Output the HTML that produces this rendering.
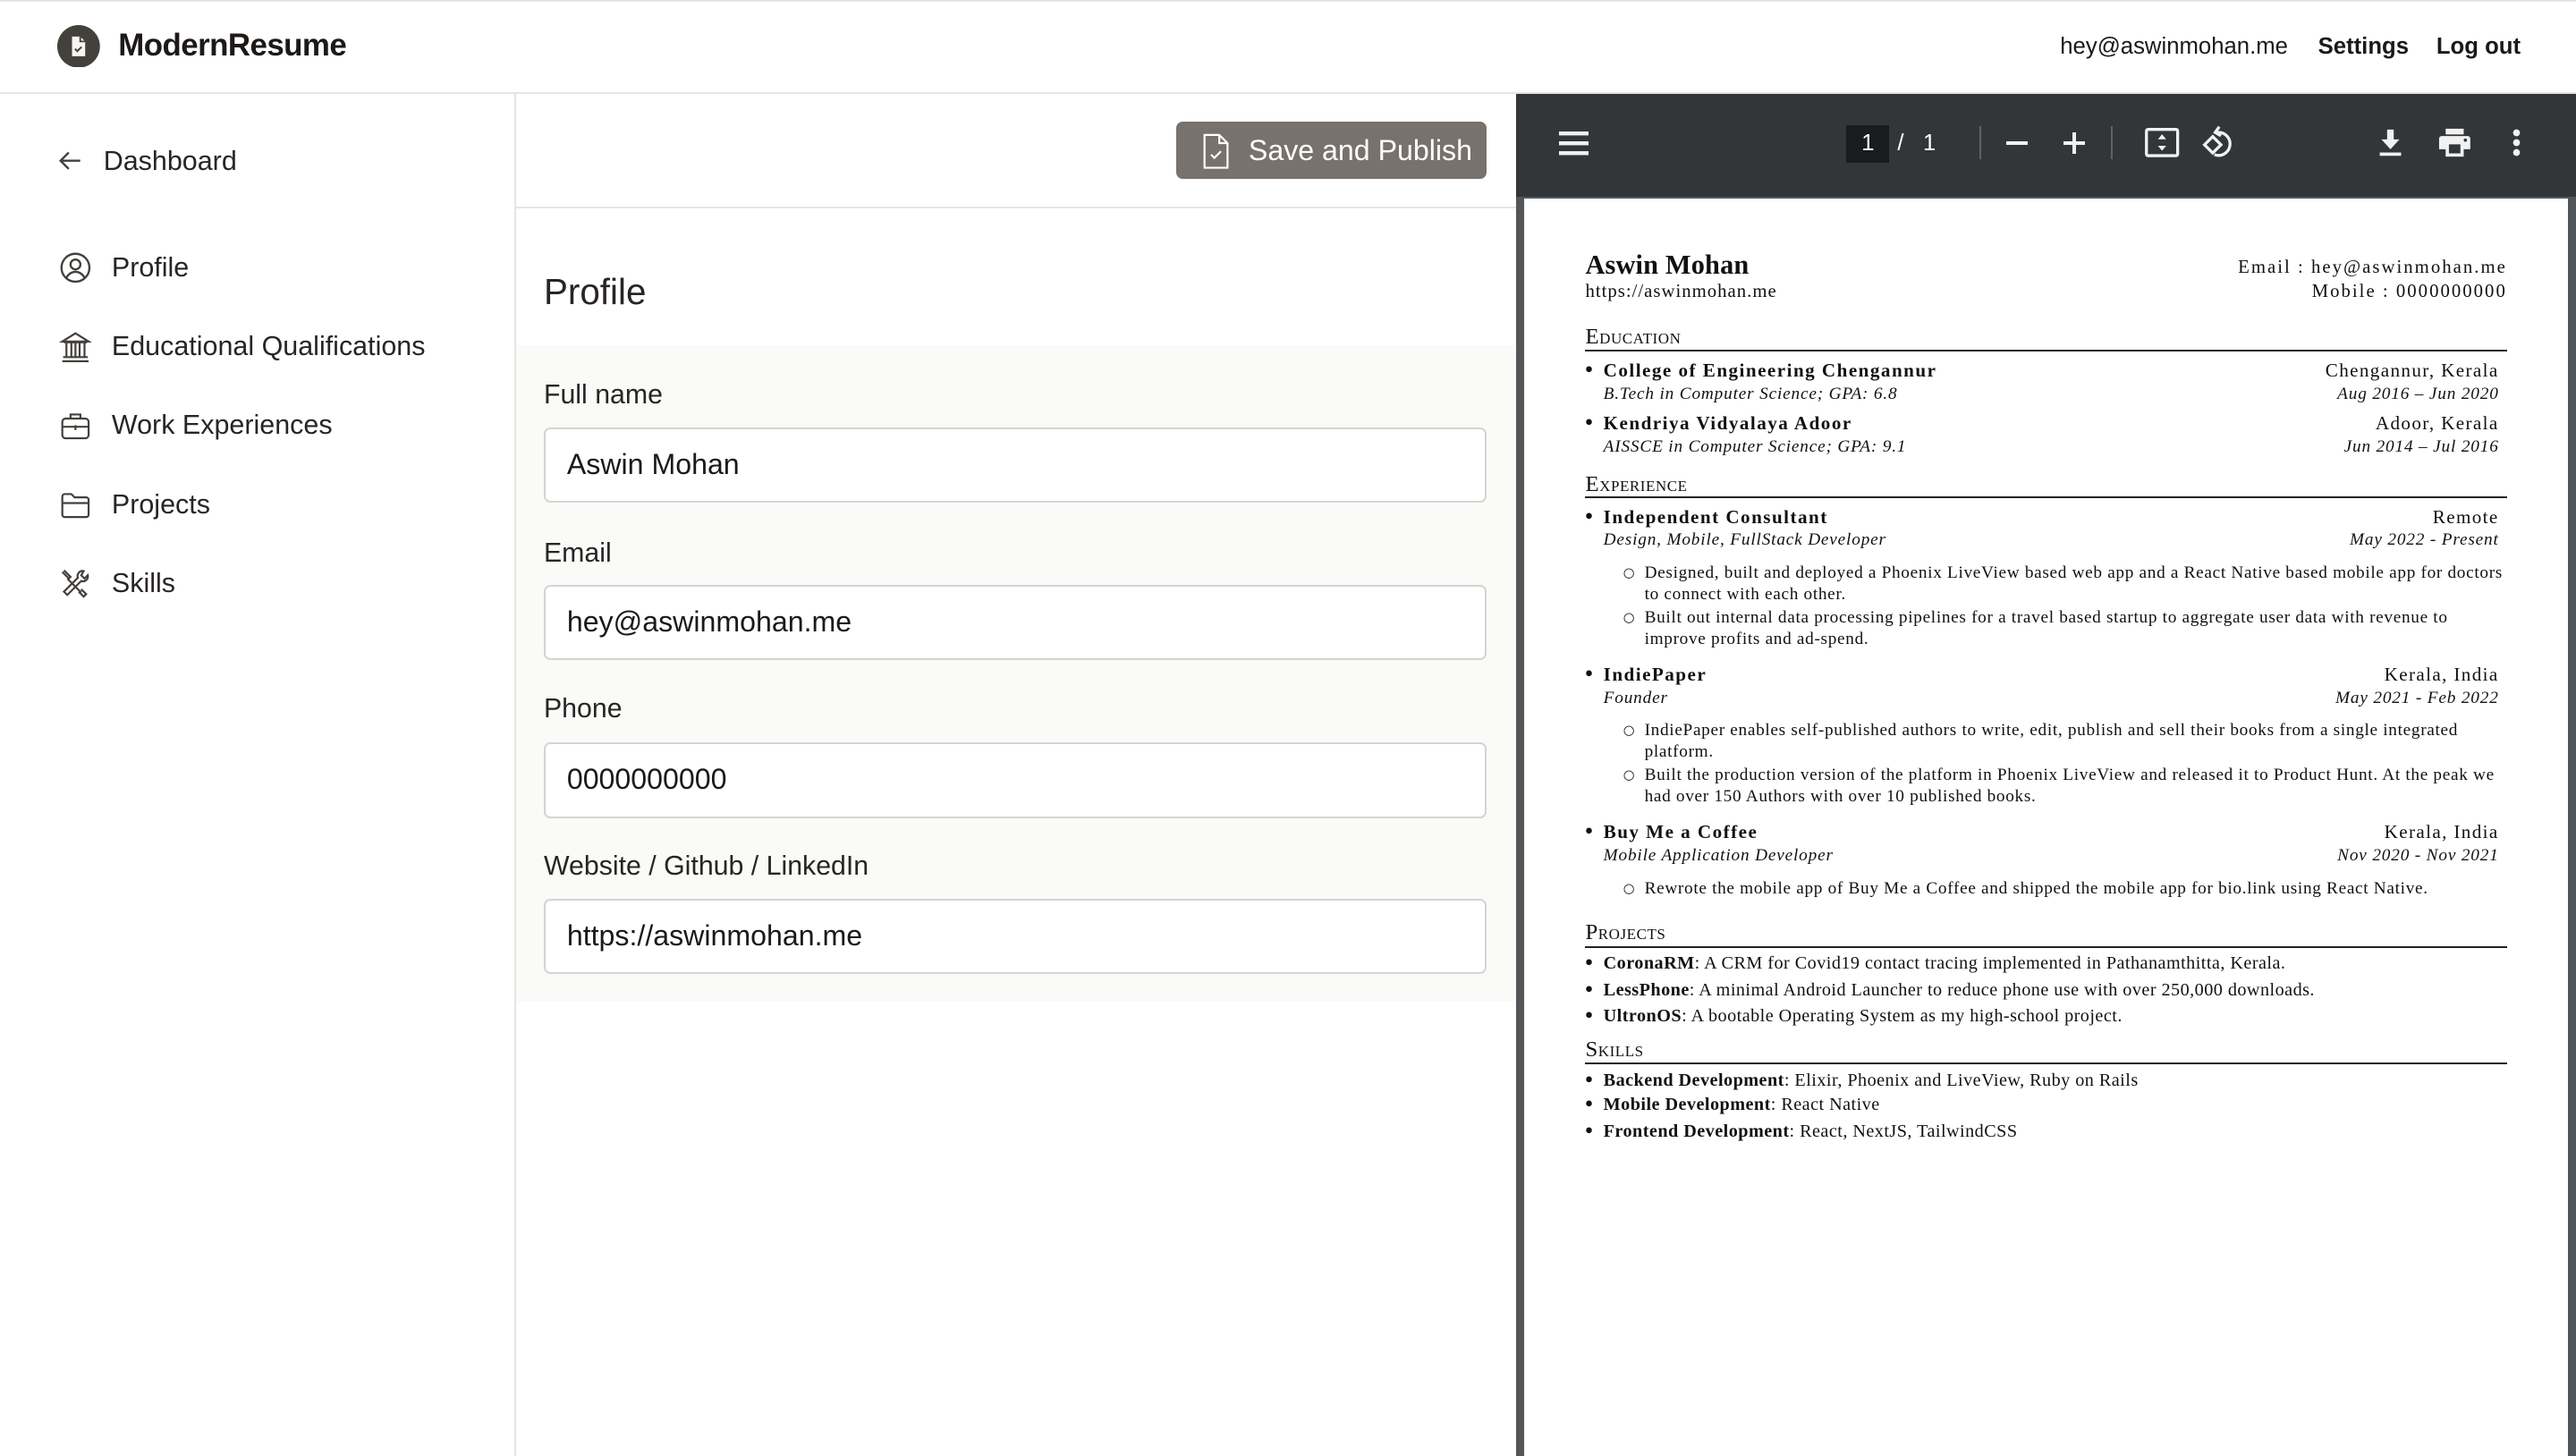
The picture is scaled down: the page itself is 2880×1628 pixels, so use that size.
<!DOCTYPE html>
<html><head><meta charset="utf-8"><style>
*{box-sizing:border-box;margin:0;padding:0}
html,body{width:2880px;height:1628px;overflow:hidden;background:#fff}
#r{zoom:1.83673;width:1568px;height:886.4px;position:relative;font-family:"Liberation Sans",sans-serif;color:#1c1917;overflow:hidden}
.a{position:absolute;white-space:nowrap}
.nav{font-size:16.6px;color:#292524;line-height:20px}
.lbl{font-size:16.5px;color:#292524;line-height:20px;left:331px}
.inp{left:331px;width:574px;height:46px;border:1.5px solid #d6d3d1;border-radius:4px;background:#fff;font-size:17.5px;line-height:43px;padding-left:13px;color:#1c1917}
.pdf{font-family:"Liberation Serif",serif;font-size:11px;color:#111;line-height:14px}
.pdf b{font-weight:bold}
.bu{font-family:"DejaVu Sans",sans-serif;font-size:10px;font-weight:bold}
.cb{font-family:"DejaVu Sans",sans-serif;font-size:8px}
.e{font-size:11.5px;letter-spacing:.75px}
.e b{letter-spacing:.8px}
.it{font-style:italic;font-size:10.5px;letter-spacing:.45px}
.sb{font-size:10.5px;letter-spacing:.37px}
.pl{font-size:11px;letter-spacing:.25px}
.h{font-family:"Liberation Serif",serif;font-size:13.5px;font-variant:small-caps;line-height:14px;letter-spacing:.3px;color:#111}
.rule{position:absolute;left:965px;width:561px;height:1px;background:#222}
.rt{text-align:right}
</style></head><body><div id="r">
<!-- header -->
<div class="a" style="left:0;top:0;width:1568px;height:1px;background:#e5e5e5"></div>
<div class="a" style="left:0;top:56px;width:1568px;height:1px;background:#e7e5e4"></div>
<svg class="a" style="left:35px;top:15px" width="26" height="26" viewBox="0 0 26 26"><circle cx="13" cy="13" r="13" fill="#44403c"/><path d="M9 7h5l3 3v9H9z" fill="#f5f5f4"/><path d="M14 7v3h3" fill="none" stroke="#44403c" stroke-width="1"/><path d="M10.8 14.5l1.4 1.4 2.6-2.6" fill="none" stroke="#44403c" stroke-width="1.1"/></svg>
<div class="a" style="left:72px;top:17px;font-size:19px;font-weight:bold;color:#1c1917;line-height:22px;letter-spacing:-.3px">ModernResume</div>
<div class="a" style="left:1254px;top:20px;font-size:14px;line-height:17px">hey@aswinmohan.me</div>
<div class="a" style="left:1411px;top:20px;font-size:14px;font-weight:bold;line-height:17px">Settings</div>
<div class="a" style="left:1483px;top:20px;font-size:14px;font-weight:bold;line-height:17px">Log out</div>
<!-- sidebar -->
<div class="a" style="left:313px;top:57px;width:1px;height:830px;background:#e7e5e4"></div>
<svg class="a" style="left:35px;top:90px" width="16" height="16" viewBox="0 0 16 16" fill="none" stroke="#44403c" stroke-width="1.3"><path d="M14 8H2M7 3L2 8l5 5"/></svg>
<div class="a nav" style="left:63px;top:88px">Dashboard</div>
<svg class="a" style="left:36px;top:153px" width="20" height="20" viewBox="0 0 20 20" fill="none" stroke="#44403c" stroke-width="1.3"><circle cx="10" cy="10" r="8.5"/><circle cx="10" cy="8" r="3"/><path d="M4.5 16c1.5-2.5 3.5-3.5 5.5-3.5s4 1 5.5 3.5"/></svg>
<div class="a nav" style="left:68px;top:153px">Profile</div>
<svg class="a" style="left:36px;top:201px" width="20" height="20" viewBox="0 0 20 20" fill="none" stroke="#44403c" stroke-width="1.2"><path d="M2 7L10 2l8 5zM3 7.5h14M4.5 8v8M7.5 8v8M10 8v8M12.5 8v8M15.5 8v8M2.5 16.5h15M2 19h16"/></svg>
<div class="a nav" style="left:68px;top:201px">Educational Qualifications</div>
<svg class="a" style="left:36px;top:249px" width="20" height="20" viewBox="0 0 20 20" fill="none" stroke="#44403c" stroke-width="1.2"><rect x="2" y="6" width="16" height="12" rx="2"/><path d="M7 6V3.5h6V6M2 11h16M10 10v3"/></svg>
<div class="a nav" style="left:68px;top:249px">Work Experiences</div>
<svg class="a" style="left:36px;top:297px" width="20" height="20" viewBox="0 0 20 20" fill="none" stroke="#44403c" stroke-width="1.2"><path d="M2 5a1.5 1.5 0 011.5-1.5h4l2 2h7A1.5 1.5 0 0118 7v9a1.5 1.5 0 01-1.5 1.5h-13A1.5 1.5 0 012 16zM2 9h16"/></svg>
<div class="a nav" style="left:68px;top:297px">Projects</div>
<svg class="a" style="left:36px;top:345px" width="20" height="20" viewBox="0 0 20 20" fill="none" stroke="#44403c" stroke-width="1.2"><path d="M3 2l4 4-1.5 1.5 8 8M2 3l4 4M15 2.5a3 3 0 00-3.5 4L3 15l2 2 8.5-8.5a3 3 0 004-3.5l-2 2-2-2zM13.5 13.5l3 3-1.5 1.5-3-3"/></svg>
<div class="a nav" style="left:68px;top:345px">Skills</div>
<!-- middle -->
<div class="a" style="left:314px;top:126px;width:609px;height:1px;background:#e7e5e4"></div>
<div class="a" style="left:716px;top:74px;width:189px;height:35px;background:#78716c;border-radius:4px"></div>
<svg class="a" style="left:731px;top:81px" width="18" height="22" viewBox="0 0 18 22" fill="none" stroke="#fff" stroke-width="1.2"><path d="M2 1h9l5 5v15H2zM11 1v5h5M6 13l2 2 4-4"/></svg>
<div class="a" style="left:760px;top:81px;font-size:17.5px;color:#fff;line-height:21px">Save and Publish</div>
<div class="a" style="left:331px;top:165px;font-size:22px;font-weight:500;color:#292524;line-height:26px">Profile</div>
<div class="a" style="left:314px;top:210px;width:609px;height:400px;background:#fafaf9"></div>
<div class="a lbl" style="top:231px">Full name</div>
<div class="a inp" style="top:260px">Aswin Mohan</div>
<div class="a lbl" style="top:327px">Email</div>
<div class="a inp" style="top:356px">hey@aswinmohan.me</div>
<div class="a lbl" style="top:422px">Phone</div>
<div class="a inp" style="top:452px">0000000000</div>
<div class="a lbl" style="top:518px">Website / Github / LinkedIn</div>
<div class="a inp" style="top:547px">https://aswinmohan.me</div>
<!-- pdf viewer -->
<div class="a" style="left:923px;top:57px;width:645px;height:830px;background:#525659"></div>
<div class="a" style="left:923px;top:57px;width:645px;height:63px;background:#323639"></div>
<svg class="a" style="left:949px;top:80px" width="18" height="15" viewBox="0 0 18 15" fill="#f1f1f1"><rect y="0" width="18" height="2.4"/><rect y="6" width="18" height="2.4"/><rect y="12" width="18" height="2.4"/></svg>
<div class="a" style="left:1124px;top:76px;width:26px;height:23px;background:#191b1c"></div>
<div class="a" style="left:1124px;top:78px;width:26px;text-align:center;color:#fff;font-size:14px;line-height:19px">1</div>
<div class="a" style="left:1155px;top:78px;color:#fff;font-size:14px;line-height:19px">/&nbsp;&nbsp;&nbsp;1</div>
<div class="a" style="left:1205px;top:77px;width:1px;height:20px;background:#5f6368"></div>
<div class="a" style="left:1221px;top:86px;width:13px;height:2px;background:#f1f1f1"></div>
<div class="a" style="left:1256px;top:86px;width:13px;height:2px;background:#f1f1f1"></div>
<div class="a" style="left:1261.5px;top:80.5px;width:2px;height:13px;background:#f1f1f1"></div>
<div class="a" style="left:1285px;top:77px;width:1px;height:20px;background:#5f6368"></div>
<svg class="a" style="left:1305px;top:77px" width="22" height="20" viewBox="0 0 22 20" fill="none" stroke="#f1f1f1" stroke-width="1.8"><rect x="1.5" y="2" width="19" height="16" rx="1"/><path d="M8.5 8L11 5l2.5 3zM8.5 12l2.5 3 2.5-3z" fill="#f1f1f1" stroke="none"/></svg>
<svg class="a" style="left:1340px;top:75px" width="22" height="24" viewBox="0 0 22 24" fill="none" stroke="#f1f1f1" stroke-width="1.8"><path d="M7 8l5 5-5 5-5-5z"/><path d="M10 5.5a7 7 0 11-2 13.5"/><path d="M11 2l-2.5 3.5 3.5 2" /></svg>
<svg class="a" style="left:1446px;top:78px" width="18" height="18" viewBox="0 0 18 18" fill="#f1f1f1"><path d="M7 1h4v6h3.5L9 13 3.5 7H7z"/><rect x="2.5" y="15" width="13" height="2"/></svg>
<svg class="a" style="left:1484px;top:78px" width="20" height="18" viewBox="0 0 20 18" fill="#f1f1f1"><rect x="4.5" y="0.5" width="11" height="3.5"/><path d="M2 5h16a1.5 1.5 0 011.5 1.5V13h-4v4.5h-11V13h-4V6.5A1.5 1.5 0 012 5zM6.5 10v5.5h7V10z"/><circle cx="16.5" cy="7.5" r="1" fill="#323639"/></svg>
<svg class="a" style="left:1529px;top:78px" width="6" height="18" viewBox="0 0 6 18" fill="#f1f1f1"><circle cx="3" cy="3" r="2.1"/><circle cx="3" cy="9" r="2.1"/><circle cx="3" cy="15" r="2.1"/></svg>
<div class="a" style="left:928px;top:121px;width:635px;height:770px;background:#fff;border-radius:0 0 6px 0"></div>
<!-- resume -->
<div class="a pdf" style="left:965px;top:152px;font-size:16.5px;line-height:19px;font-weight:bold;letter-spacing:.1px">Aswin Mohan</div>
<div class="a pdf" style="left:965px;top:171px;font-size:11.3px;letter-spacing:.55px">https://aswinmohan.me</div>
<div class="a pdf rt" style="right:42px;top:156px;font-size:11.3px;letter-spacing:1.1px">Email : hey@aswinmohan.me</div>
<div class="a pdf rt" style="right:42px;top:171px;font-size:11.3px;letter-spacing:1.1px">Mobile : 0000000000</div>

<div class="a h" style="left:965px;top:198px">Education</div><div class="rule" style="top:213px"></div>
<div class="a pdf bu" style="left:964px;top:219px">•</div><div class="a pdf e" style="left:976px;top:219px"><b>College of Engineering Chengannur</b></div>
<div class="a pdf e rt" style="right:47px;top:219px">Chengannur, Kerala</div>
<div class="a pdf it" style="left:976px;top:233px">B.Tech in Computer Science; GPA: 6.8</div>
<div class="a pdf it rt" style="right:47px;top:233px">Aug 2016 – Jun 2020</div>
<div class="a pdf bu" style="left:964px;top:251px">•</div><div class="a pdf e" style="left:976px;top:251px"><b>Kendriya Vidyalaya Adoor</b></div>
<div class="a pdf e rt" style="right:47px;top:251px">Adoor, Kerala</div>
<div class="a pdf it" style="left:976px;top:265px">AISSCE in Computer Science; GPA: 9.1</div>
<div class="a pdf it rt" style="right:47px;top:265px">Jun 2014 – Jul 2016</div>

<div class="a h" style="left:965px;top:288px">Experience</div><div class="rule" style="top:302px"></div>
<div class="a pdf bu" style="left:964px;top:308px">•</div><div class="a pdf e" style="left:976px;top:308px"><b>Independent Consultant</b></div>
<div class="a pdf e rt" style="right:47px;top:308px">Remote</div>
<div class="a pdf it" style="left:976px;top:322px">Design, Mobile, FullStack Developer</div>
<div class="a pdf it rt" style="right:47px;top:322px">May 2022 - Present</div>
<div class="a pdf cb" style="left:988px;top:342px">○</div><div class="a pdf sb" style="left:1001px;top:342px">Designed, built and deployed a Phoenix LiveView based web app and a React Native based mobile app for doctors</div>
<div class="a pdf sb" style="left:1001px;top:355px">to connect with each other.</div>
<div class="a pdf cb" style="left:988px;top:369px">○</div><div class="a pdf sb" style="left:1001px;top:369px">Built out internal data processing pipelines for a travel based startup to aggregate user data with revenue to</div>
<div class="a pdf sb" style="left:1001px;top:382px">improve profits and ad-spend.</div>
<div class="a pdf bu" style="left:964px;top:404px">•</div><div class="a pdf e" style="left:976px;top:404px"><b>IndiePaper</b></div>
<div class="a pdf e rt" style="right:47px;top:404px">Kerala, India</div>
<div class="a pdf it" style="left:976px;top:418px">Founder</div>
<div class="a pdf it rt" style="right:47px;top:418px">May 2021 - Feb 2022</div>
<div class="a pdf cb" style="left:988px;top:438px">○</div><div class="a pdf sb" style="left:1001px;top:438px">IndiePaper enables self-published authors to write, edit, publish and sell their books from a single integrated</div>
<div class="a pdf sb" style="left:1001px;top:451px">platform.</div>
<div class="a pdf cb" style="left:988px;top:465px">○</div><div class="a pdf sb" style="left:1001px;top:465px">Built the production version of the platform in Phoenix LiveView and released it to Product Hunt. At the peak we</div>
<div class="a pdf sb" style="left:1001px;top:478px">had over 150 Authors with over 10 published books.</div>
<div class="a pdf bu" style="left:964px;top:500px">•</div><div class="a pdf e" style="left:976px;top:500px"><b>Buy Me a Coffee</b></div>
<div class="a pdf e rt" style="right:47px;top:500px">Kerala, India</div>
<div class="a pdf it" style="left:976px;top:514px">Mobile Application Developer</div>
<div class="a pdf it rt" style="right:47px;top:514px">Nov 2020 - Nov 2021</div>
<div class="a pdf cb" style="left:988px;top:534px">○</div><div class="a pdf sb" style="left:1001px;top:534px">Rewrote the mobile app of Buy Me a Coffee and shipped the mobile app for bio.link using React Native.</div>

<div class="a h" style="left:965px;top:561px">Projects</div><div class="rule" style="top:576px"></div>
<div class="a pdf bu" style="left:964px;top:580px">•</div><div class="a pdf pl" style="left:976px;top:580px"><b>CoronaRM</b>: A CRM for Covid19 contact tracing implemented in Pathanamthitta, Kerala.</div>
<div class="a pdf bu" style="left:964px;top:596px">•</div><div class="a pdf pl" style="left:976px;top:596px"><b>LessPhone</b>: A minimal Android Launcher to reduce phone use with over 250,000 downloads.</div>
<div class="a pdf bu" style="left:964px;top:612px">•</div><div class="a pdf pl" style="left:976px;top:612px"><b>UltronOS</b>: A bootable Operating System as my high-school project.</div>
<div class="a h" style="left:965px;top:632px">Skills</div><div class="rule" style="top:647px"></div>
<div class="a pdf bu" style="left:964px;top:651px">•</div><div class="a pdf pl" style="left:976px;top:651px"><b>Backend Development</b>: Elixir, Phoenix and LiveView, Ruby on Rails</div>
<div class="a pdf bu" style="left:964px;top:666px">•</div><div class="a pdf pl" style="left:976px;top:666px"><b>Mobile Development</b>: React Native</div>
<div class="a pdf bu" style="left:964px;top:682px">•</div><div class="a pdf pl" style="left:976px;top:682px"><b>Frontend Development</b>: React, NextJS, TailwindCSS</div>
</div></body></html>
